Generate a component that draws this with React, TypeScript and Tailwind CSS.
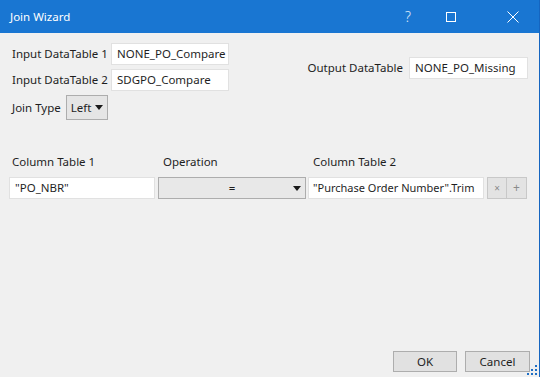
import React from 'react'

const font = { fontFamily: '"Noto Sans", "Open Sans", sans-serif' }

const TextBox = ({ value, className = '' }: { value: string; className?: string }) => (
  <div className={`h-[22px] bg-white border border-[#e1e1e1] px-[5px] flex items-center text-[11.5px] text-[#1f1f1f] whitespace-nowrap overflow-hidden ${className}`}>
    {value}
  </div>
)

const Caret = () => (
  <svg width="8" height="5" viewBox="0 0 8 5">
    <path d="M0 0h8L4 5z" fill="#1a1a1a" />
  </svg>
)

const App = () => {
  return (
    <div className="w-[541px] h-[377px] bg-white" style={font}>
      <div className="w-[540px] h-[377px] bg-[#f0f0f0] border-r border-[#1565c0] flex flex-col relative">
        {/* Title bar */}
        <div className="h-[33px] bg-[#1976d2] flex items-center pl-[10px] shrink-0">
          <span className="text-white text-[11.5px]">Join Wizard</span>
          <div className="ml-auto flex items-center h-full pr-[20px]">
            <span className="text-white/85 text-[14px] font-light">?</span>
            <span className="ml-[35px] w-[10px] h-[10px] border border-white" />
            <svg className="ml-[51px]" width="12" height="12" viewBox="0 0 12 12">
              <path d="M0.5 0.5L11.5 11.5M11.5 0.5L0.5 11.5" stroke="white" strokeWidth="1" />
            </svg>
          </div>
        </div>

        {/* Top fields */}
        <div className="flex pt-[10px] pl-[12px] pr-[11px] text-[11.5px] text-[#1e1e1e] whitespace-nowrap">
          <div className="flex flex-col gap-[4px]">
            <div className="flex items-center gap-[5px]">
              <span className="w-[94px]">Input DataTable 1</span>
              <TextBox value="NONE_PO_Compare" className="w-[118px]" />
            </div>
            <div className="flex items-center gap-[5px]">
              <span className="w-[94px]">Input DataTable 2</span>
              <TextBox value="SDGPO_Compare" className="w-[118px]" />
            </div>
            <div className="flex items-center gap-[5px]">
              <span>Join Type</span>
              <div className="h-[25px] w-[42px] border border-[#adadad] bg-[#e5e5e5] flex items-center justify-between px-[4px]">
                <span>Left</span>
                <Caret />
              </div>
            </div>
          </div>
          <div className="ml-auto flex items-center gap-[6px] pb-[28px]">
            <span>Output DataTable</span>
            <TextBox value="NONE_PO_Missing" className="w-[119px]" />
          </div>
        </div>

        {/* Column headers */}
        <div className="flex mt-[34px] text-[11.5px] text-[#1e1e1e] h-[16px] items-center">
          <span className="w-[163px] pl-[12px]">Column Table 1</span>
          <span className="w-[150px]">Operation</span>
          <span>Column Table 2</span>
        </div>

        {/* Mapping row */}
        <div className="flex items-center mt-[7px] pl-[9px] text-[11.5px] text-[#1e1e1e]">
          <TextBox value={'"PO_NBR"'} className="w-[146px]" />
          <div className="ml-[3px] w-[148px] h-[22px] border border-[#adadad] bg-[#e8e8e8] flex items-center relative">
            <span className="flex-1 text-center">=</span>
            <span className="absolute right-[4px] top-[8px]">
              <Caret />
            </span>
          </div>
          <TextBox value={'"Purchase Order Number".Trim'} className="ml-[2px] w-[176px] !px-[4px] !text-[11px]" />
          <div className="ml-[3px] flex">
            <div className="w-[20px] h-[22px] border border-[#c8c8c8] bg-[#e3e3e3] flex items-center justify-center text-[10px] text-[#8a8a8a]">
              ×
            </div>
            <div className="w-[20px] h-[22px] border border-l-0 border-[#c8c8c8] bg-[#e3e3e3] flex items-center justify-center text-[12px] text-[#8a8a8a]">
              +
            </div>
          </div>
        </div>

        {/* Buttons */}
        <div className="mt-auto flex justify-end gap-[8px] pr-[9px] pb-[5px] text-[11.5px] text-[#1e1e1e]">
          <button className="w-[64px] h-[21px] border border-[#adadad] bg-[#e1e1e1] flex items-center justify-center">OK</button>
          <button className="w-[65px] h-[21px] border border-[#adadad] bg-[#e1e1e1] flex items-center justify-center">Cancel</button>
        </div>

        {/* Resize grip */}
        <svg className="absolute right-[2px] bottom-[2px]" width="10" height="10" viewBox="0 0 10 10">
          <rect x="8" y="0" width="2" height="2" fill="#1f6fc5" />
          <rect x="4" y="4" width="2" height="2" fill="#1f6fc5" />
          <rect x="8" y="4" width="2" height="2" fill="#1f6fc5" />
          <rect x="0" y="8" width="2" height="2" fill="#1f6fc5" />
          <rect x="4" y="8" width="2" height="2" fill="#1f6fc5" />
          <rect x="8" y="8" width="2" height="2" fill="#1f6fc5" />
        </svg>
      </div>
    </div>
  )
}

export default App
